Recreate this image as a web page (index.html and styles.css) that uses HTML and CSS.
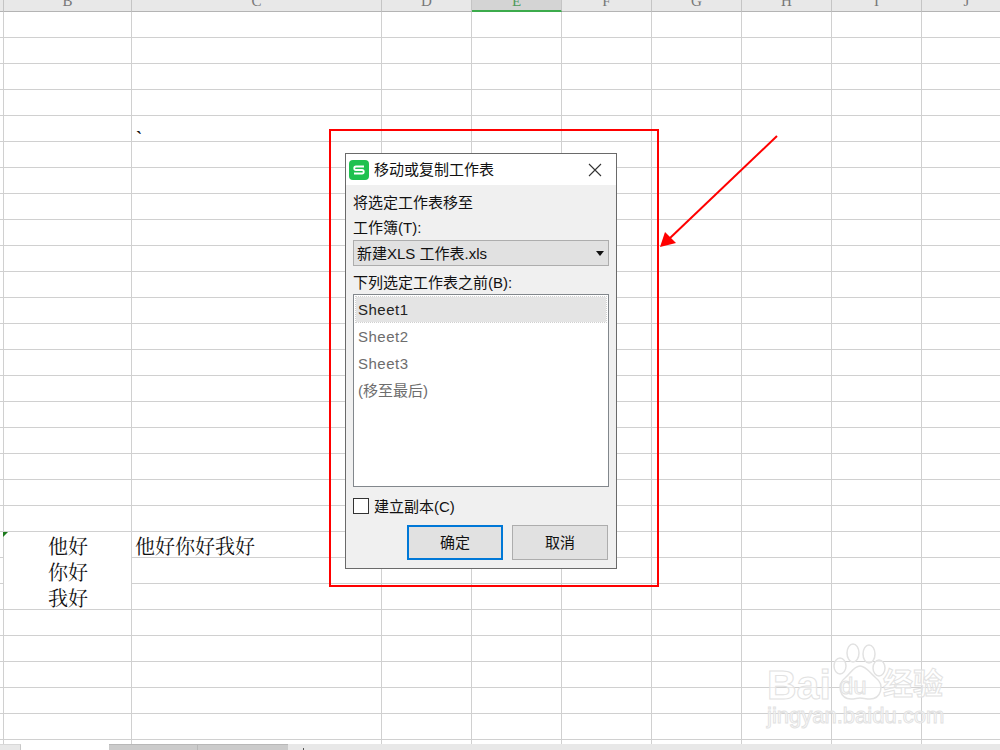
FILE: index.html
```html
<!doctype html>
<html>
<head>
  <meta charset="utf-8">
  <link rel="stylesheet" href="styles.css">
</head>
<body>

  <div class="sheet">
    <div class="column colA"><div class="head"></div><i class="marker"></i></div>
    <div class="column colB">
      <div class="head">B</div>
      <div class="cell wrapped">他好<br>你好<br>我好</div>
    </div>
    <div class="column colC">
      <div class="head">C</div>
      <div class="cell tick">`</div>
      <div class="cell overflow">他好你好我好</div>
    </div>
    <div class="column"><div class="head">D</div></div>
    <div class="column"><div class="head selected">E</div></div>
    <div class="column"><div class="head">F</div></div>
    <div class="column"><div class="head">G</div></div>
    <div class="column"><div class="head">H</div></div>
    <div class="column"><div class="head">I</div></div>
    <div class="column"><div class="head">J</div></div>
  </div>

  <div class="tabBar">
    <div class="tab first"></div>
    <div class="tab current"></div>
    <div class="tab other"></div>
    <div class="tab other"></div>
    <div class="tab add"></div>
  </div>

  <!-- annotation drawn on top of the screenshot -->
  <div class="redBox"></div>
  <svg class="arrow" width="130" height="125" viewBox="0 0 130 125">
    <line x1="126" y1="2" x2="18" y2="105" stroke="#ff0000" stroke-width="2"/>
    <polygon points="9,113 14,98 25,109" fill="#ff0000"/>
  </svg>

  <div class="dialog">
    <div class="titleBar">
      <svg class="appIcon" width="20" height="20" viewBox="0 0 20 20">
        <rect width="20" height="20" rx="4" fill="#1fc14f"/>
        <path d="M15 6.5H7a1.7 1.7 0 0 0 0 3.5h6a1.7 1.7 0 0 1 0 3.5H5" fill="none" stroke="#fff" stroke-width="1.8"/>
      </svg>
      <span class="title">移动或复制工作表</span>
      <svg class="closeIcon" width="14" height="14" viewBox="0 0 14 14">
        <path d="M1 1L13 13M13 1L1 13" stroke="#333" stroke-width="1.1" fill="none"/>
      </svg>
    </div>
    <div class="dialogBody">
      <div class="label first">将选定工作表移至</div>
      <div class="label book">工作簿(T):</div>
      <div class="select">
        <span>新建XLS 工作表.xls</span>
        <i class="caret"></i>
      </div>
      <div class="label before">下列选定工作表之前(B):</div>
      <div class="list">
        <div class="item active">Sheet1</div>
        <div class="item">Sheet2</div>
        <div class="item">Sheet3</div>
        <div class="item">(移至最后)</div>
      </div>
      <label class="copyRow">
        <i class="checkbox"></i>
        <span>建立副本(C)</span>
      </label>
      <div class="buttons">
        <button class="btn primary">确定</button>
        <button class="btn">取消</button>
      </div>
    </div>
  </div>

  <div class="watermark">
    <svg class="paw" width="62" height="62" viewBox="0 0 62 62">
      <g fill="rgba(255,255,255,0.5)" stroke="#e2e2e2" stroke-width="1.5">
        <ellipse cx="8" cy="24" rx="6" ry="8"/>
        <ellipse cx="21" cy="11" rx="6" ry="9"/>
        <ellipse cx="37" cy="12" rx="6" ry="9"/>
        <ellipse cx="47" cy="26" rx="6" ry="8"/>
        <path d="M28 24c-6 0-9 7-15 12-9 7-5 21 6 21 4 0 6-1 9-1s6 1 10 1c11 0 15-14 6-21-6-5-10-12-16-12z"/>
      </g>
    </svg>
    <div class="wmBai">Bai</div>
    <div class="wmDu">du</div>
    <div class="wmJy">经验</div>
    <div class="wmUrl">jingyan.baidu.com</div>
  </div>

</body>
</html>
```

FILE: styles.css
```css
html, body {
  margin: 0;
  height: 750px;
  overflow: hidden;
}
body {
  position: relative;
  background: #fff;
  font-family: "Liberation Sans", "Noto Sans CJK SC", sans-serif;
}

/* each column carries its letter, its cells and its grid line.
   the row lines are one background, starting under the header */
.sheet {
  display: flex;
  height: 744px;
  overflow: hidden;
  background-image: linear-gradient(to bottom, transparent 25px, #d0d0d0 25px);
  background-size: 100% 26px;
  background-position: 0 12px;
}
.column {
  flex: 0 0 90px;
  box-sizing: border-box;
  display: grid;
  grid-template-rows: 12px repeat(28, 26px);
  border-right: 1px solid #d0d0d0;
  position: relative;
}
.colA { flex-basis: 4px; }
.colB { flex-basis: 128px; }
.colC { flex-basis: 250px; }

/* column letters are cut off by the top of the picture */
.head {
  box-sizing: border-box;
  height: 12px;
  margin-right: -1px;
  overflow: hidden;
  background: #e8e8e8;
  border-right: 1px solid #c4c4c4;
  border-bottom: 1px solid #b4b4b4;
  font: 15px/3px "Liberation Serif", "Noto Sans CJK SC", serif;
  color: #777;
  text-align: center;
}
.head.selected {
  background: #d4d4d4;
  border-bottom: 2px solid #3cab4c;
  color: #4f9a5c;
}

.cell {
  font: 20px/26px "Liberation Serif", "Noto Serif CJK SC", "Noto Sans CJK SC", serif;
  color: #111;
  white-space: nowrap;
}
.tick {
  grid-row: 6;
  padding: 9px 0 0 4px;
  font-size: 18px;
  font-weight: bold;
}
.wrapped {
  grid-row: 22 / span 3;
  text-align: center;
  background: #fff;
  margin-bottom: 1px;
  padding: 2px 0 0 1px;
}
.overflow {
  grid-row: 22;
  padding: 2px 0 0 3px;
}
.marker {
  position: absolute;
  z-index: 1;
  left: 3px;
  top: 532px;
  border-top: 5px solid #1d7a1d;
  border-right: 5px solid transparent;
}

.tabBar {
  display: flex;
  height: 6px;
  background: #e8e8e8;
}
.tab { box-sizing: border-box; }
.tab.first { flex: 0 0 21px; border-right: 1px solid #c8c8c8; border-top: 1px solid #d8d8d8; }
.tab.current { flex: 0 0 88px; background: #fff; }
.tab.other { flex: 0 0 89px; background: #cbcbcb; border-top: 1px solid #b8b8b8; border-right: 1px solid #b8b8b8; }
.tab.other + .tab.other { flex-basis: 90px; border-right: 0; }
.tab.add { width: 1px; height: 2px; margin: 4px 0 0 15px; background: #555; }

.redBox {
  position: absolute;
  left: 329px;
  top: 129px;
  width: 326px;
  height: 454px;
  border: 2px solid #ff0000;
}
.arrow {
  position: absolute;
  left: 651px;
  top: 134px;
}

.dialog {
  position: absolute;
  left: 345px;
  top: 153px;
  width: 270px;
  height: 414px;
  border: 1px solid #6a6a6a;
  background: #f0f0f0;
  color: #111;
  font-size: 15px;
}
.titleBar {
  display: flex;
  align-items: center;
  height: 31px;
  background: #fff;
  padding-left: 3px;
}
.appIcon { flex: none; margin-right: 5px; }
.title { flex: 1; padding-bottom: 2px; }
.closeIcon { flex: none; margin-right: 14px; }

.dialogBody {
  padding: 0 7px;
}
.label { line-height: 18px; }
.label.first { padding-top: 9px; }
.label.book { padding-top: 7px; }
.label.before { padding-top: 8px; }

.select {
  display: flex;
  align-items: center;
  justify-content: space-between;
  box-sizing: border-box;
  height: 26px;
  margin-top: 3px;
  padding: 0 4px 2px 3px;
  background: #e1e1e1;
  border: 1px solid #adadad;
}
.caret {
  margin-top: 2px;
  border-top: 5px solid #111;
  border-left: 4px solid transparent;
  border-right: 4px solid transparent;
}

.list {
  box-sizing: border-box;
  height: 193px;
  margin-top: 2px;
  padding: 2px;
  background: #fff;
  border: 1px solid #82878c;
}
.item {
  height: 27px;
  line-height: 25px;
  padding-left: 2px;
  color: #6d6d6d;
  letter-spacing: 0.5px;
}
.item:last-child { letter-spacing: 0; }
.item.active {
  height: 25px;
  line-height: 25px;
  margin-bottom: 2px;
  background: #e4e4e4;
  outline: 1px dotted #d0d0d0;
  color: #222;
}

.copyRow {
  display: flex;
  align-items: center;
  gap: 5px;
  margin-top: 10px;
  height: 18px;
}
.copyRow span { padding-bottom: 2px; }
.checkbox {
  box-sizing: border-box;
  width: 16px;
  height: 16px;
  background: #fff;
  border: 1px solid #333;
}

.buttons {
  display: flex;
  justify-content: flex-end;
  gap: 9px;
  margin-top: 10px;
  padding-right: 1px;
}
.btn {
  box-sizing: border-box;
  width: 96px;
  height: 35px;
  padding: 0 0 2px;
  background: #e1e1e1;
  border: 1px solid #adadad;
  font-family: inherit;
  font-size: 15px;
  color: #111;
}
.btn.primary { border: 2px solid #0078d7; }

/* faint site watermark, grid lines show through it */
.watermark {
  position: absolute;
  left: 766px;
  top: 642px;
  width: 190px;
  height: 100px;
  color: rgba(255, 255, 255, 0.5);
  -webkit-text-stroke: 1px #e2e2e2;
  white-space: nowrap;
}
.paw {
  position: absolute;
  left: 66px;
  top: 0;
}
.wmBai {
  position: absolute;
  left: 1px;
  top: 20px;
  font-weight: bold;
  font-size: 41px;
  line-height: 46px;
}
.wmDu {
  position: absolute;
  left: 74px;
  top: 31px;
  font-size: 24px;
  line-height: 26px;
}
.wmJy {
  position: absolute;
  left: 117px;
  top: 24px;
  font-size: 30px;
  line-height: 36px;
  font-weight: bold;
}
.wmUrl {
  position: absolute;
  left: 1px;
  top: 61px;
  font: 22px/26px "Liberation Sans", sans-serif;
}
```
